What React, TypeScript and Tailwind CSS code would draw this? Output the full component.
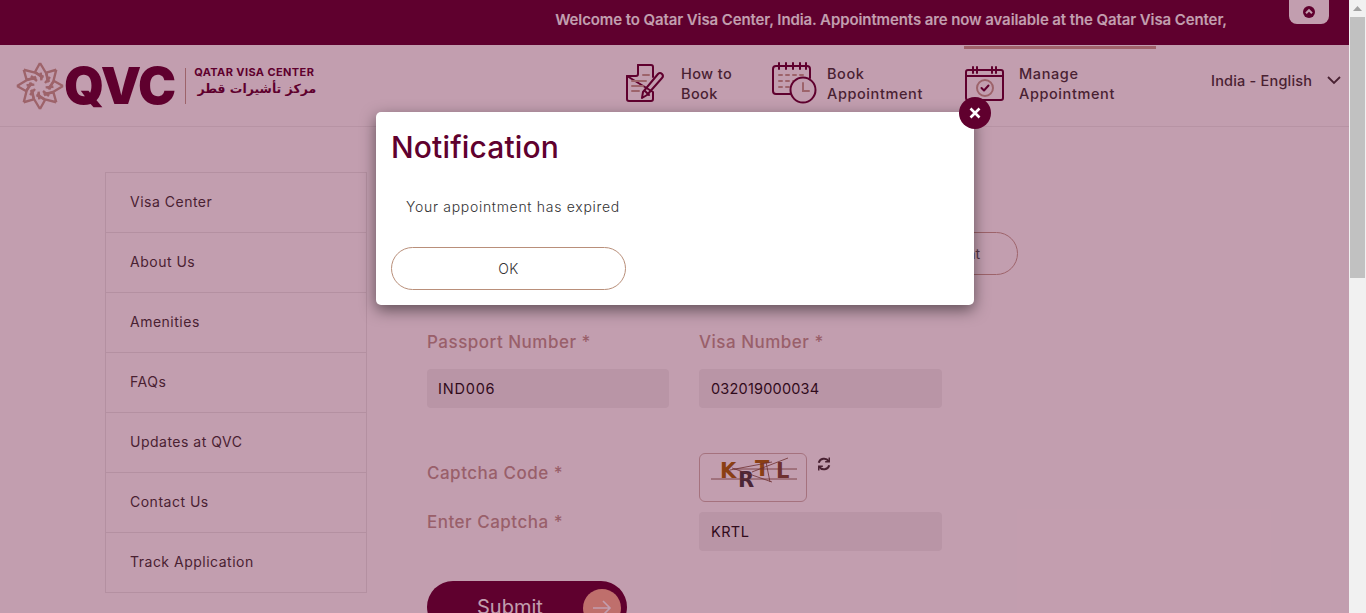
import React from "react";

const sideLinks = ["Visa Center", "About Us", "Amenities", "FAQs", "Updates at QVC", "Contact Us", "Track Application"];

function StarLogo() {
    const angles = [0, 45, 90, 135, 180, 225, 270, 315];
    return (
        <svg width="48" height="48" viewBox="-24 -24 48 48" fill="none" stroke="#c4a090" strokeWidth="2.4" strokeLinejoin="round" className="shrink-0">
            {angles.map((a) => (
                <g key={a} transform={`rotate(${a})`}>
                    <path d="M0 -23 L6 -13 L9 -4 M0 -23 L-5 -14 L3 -8 M-9 -10 L-3 -5" />
                </g>
            ))}
        </svg>
    );
}

function DocIcon() {
    return (
        <svg width="40" height="40" viewBox="0 0 40 40" fill="none" stroke="#60002e" strokeWidth="2" strokeLinejoin="round" strokeLinecap="round" className="shrink-0">
            <path d="M13 1 H26 Q28 1 28 3 V13 M28 28 V35 Q28 37 26 37 H4 Q2 37 2 35 V12 Z" />
            <path d="M13 1 V10 Q13 12 11 12 H2" />
            <path d="M33 10 Q35 8 37 10 Q39 12 37 14 L22 31 L17 34 L18 28 Z" />
            <path d="M20 27 L24 31" />
            <g stroke="#c4a090">
                <path d="M18 11 H24 M7 17 H21 M7 22 H18 M7 27 H14" />
            </g>
        </svg>
    );
}

function CalendarClockIcon() {
    return (
        <svg width="46" height="44" viewBox="0 0 46 44" fill="none" stroke="#60002e" strokeWidth="2" strokeLinecap="round" className="shrink-0">
            <path d="M20 32 H4 Q1 32 1 29 V7 Q1 4 4 4 H35 Q38 4 38 7 V16" />
            <path d="M7 1 V7 M14 1 V7 M21 1 V7 M28 1 V7 M34 1 V7" />
            <path d="M7 13 H10 M14 13 H17 M21 13 H24 M28 13 H31 M7 19 H10 M14 19 H17 M21 19 H24 M7 25 H10 M14 25 H17" stroke="#c4a090" />
            <circle cx="31" cy="28" r="12.5" fill="#ffffff" />
            <path d="M31 21 V29 H37" stroke="#c4a090" />
        </svg>
    );
}

function CalendarCheckIcon() {
    return (
        <svg width="40" height="36" viewBox="0 0 40 36" fill="none" stroke="#60002e" strokeWidth="2" strokeLinecap="round" strokeLinejoin="round" className="shrink-0">
            <rect x="1" y="4" width="37" height="30" rx="2" />
            <path d="M1 10 H38" />
            <path d="M8 1 V7 M12 1 V7 M27 1 V7 M31 1 V7" />
            <circle cx="20" cy="22" r="8" stroke="#c4a090" />
            <path d="M16.5 22 L19 24.5 L23.5 19.5" />
        </svg>
    );
}

function Captcha() {
    return (
        <svg width="106" height="47" viewBox="0 0 106 47" fontFamily="'DejaVu Sans', sans-serif" fontWeight="700" fontSize="21">
            <text x="20" y="24" fill="#a46505">K</text>
            <text x="38" y="33" fill="#3d3d3d">R</text>
            <text x="55" y="22" fill="#a46505">T</text>
            <text x="76" y="24" fill="#774d32">L</text>
            <g stroke="#774d32" strokeWidth="0.8" fill="none">
                <path d="M11 25 H97 M34 15 H97 M32 14 L72 28 M52 18 L88 4 M66 8 L70 28 M30 16 L72 8" />
            </g>
        </svg>
    );
}

function App() {
    return (
        <div className="flex h-[613px] w-[1366px] overflow-hidden bg-white font-['Inter',sans-serif]">
            <div className="relative h-[613px] w-[1349px] shrink-0 overflow-hidden">
                {/* top bar */}
                <div className="relative flex h-[45px] justify-end bg-[#60002e]">
                    <p className="mt-[9px] mr-[122px] text-[15px] font-semibold tracking-[-0.1px] text-white">
                        Welcome to Qatar Visa Center, India. Appointments are now available at the Qatar Visa Center,
                    </p>
                    <div className="absolute top-0 left-[1289px] flex h-6 w-10 items-center justify-center rounded-b-lg bg-white">
                        <svg width="12" height="12" viewBox="0 0 12 12">
                            <circle cx="6" cy="6" r="6" fill="#60002e" />
                            <path d="M3 7.2 L6 4.2 L9 7.2" fill="none" stroke="#ffffff" strokeWidth="2" />
                        </svg>
                    </div>
                </div>

                {/* header */}
                <div className="flex h-[82px] items-stretch border-b border-[#eeeeee]">
                    <div className="ml-[16px] flex w-[609px] items-center">
                        <StarLogo />
                        <span className="text-[51px] leading-none font-black tracking-[-1px] text-[#60002e]">QVC</span>
                        <div className="ml-[10px] h-[36px] w-px bg-[#c4a090]" />
                        <div className="mb-[8px] ml-[8px] flex w-[122px] flex-col">
                            <span className="text-[11px] leading-[14px] font-bold tracking-[0.4px] text-[#60002e]">QATAR VISA CENTER</span>
                            <span dir="rtl" className="font-['DejaVu_Sans',sans-serif] text-[12.5px] leading-[20px] font-bold text-[#60002e]">مركز تأشيرات قطر</span>
                        </div>
                    </div>
                    <div className="flex w-[147px] items-center pb-1">
                        <DocIcon />
                        <span className="ml-4 text-[14.5px] leading-5 font-medium tracking-[0.4px] text-[#3b3535]">How to<br />Book</span>
                    </div>
                    <div className="flex w-[192px] items-center pb-1">
                        <CalendarClockIcon />
                        <span className="ml-[9px] text-[14.5px] leading-5 font-medium tracking-[0.6px] text-[#3b3535]">Book<br />Appointment</span>
                    </div>
                    <div className="mt-px flex w-[192px] items-center border-t-[3px] border-[#c8a090] pb-[7px] pl-px">
                        <CalendarCheckIcon />
                        <span className="ml-[14px] text-[14.5px] leading-5 font-medium tracking-[0.6px] text-[#3b3535]">Manage<br />Appointment</span>
                    </div>
                    <div className="ml-[55px] flex items-center pb-[10px]">
                        <span className="text-[14.5px] font-medium tracking-[0.2px] text-[#3b3535]">India - English</span>
                        <svg className="ml-[15px]" width="14" height="9" viewBox="0 0 14 9" fill="none" stroke="#3b3535" strokeWidth="1.8">
                            <path d="M1 1 L7 7 L13 1" />
                        </svg>
                    </div>
                </div>

                {/* content */}
                <div className="flex pt-[45px]">
                    <div className="ml-[105px] h-[421px] w-[262px] shrink-0 border border-b-0 border-[#e8e8e8]">
                        {sideLinks.map((link) => (
                            <div key={link} className="flex h-[60px] items-center border-b border-[#e8e8e8] pb-[2px] pl-[24px] text-[14px] tracking-[0.5px] text-[#3b3535]">
                                {link}
                            </div>
                        ))}
                    </div>
                    <div className="ml-[60px] w-[591px]">
                        <div className="mt-[60px] flex justify-end">
                            <div className="flex h-[43px] w-[235px] items-center justify-end rounded-full border border-[#c4a090] pr-[37px] text-[14px] text-[#555555]">
                                Cancel Appointment
                            </div>
                        </div>
                        <div className="mt-[56px] grid grid-cols-[242px_243px] gap-x-[30px]">
                            <label className="text-[17px] leading-[22px] font-medium tracking-[0.5px] text-[#bd9a8f]">Passport Number *</label>
                            <label className="text-[17px] leading-[22px] font-medium tracking-[0.5px] text-[#bd9a8f]">Visa Number *</label>
                            <div className="mt-[16px] flex h-[39px] items-center rounded bg-[#f0f0f0] pl-[11px] text-[14.5px] tracking-[0.8px] text-[#111111]">IND006</div>
                            <div className="mt-[16px] flex h-[39px] items-center rounded bg-[#f0f0f0] pl-[12px] text-[14.5px] tracking-[0.2px] text-[#111111]">032019000034</div>
                        </div>
                        <div className="mt-[45px] grid grid-cols-[242px_243px] gap-x-[30px]">
                            <label className="mt-[9px] text-[17px] leading-[22px] font-medium tracking-[0.5px] text-[#bd9a8f]">Captcha Code *</label>
                            <div className="flex items-start">
                                <div className="h-[49px] w-[108px] rounded-md border border-[#d0b8b0] bg-white">
                                    <Captcha />
                                </div>
                                <svg className="mt-[4px] ml-[10px]" width="14" height="14" viewBox="0 0 24 24" fill="none" stroke="#3b3535" strokeWidth="3.5">
                                    <path d="M3 10 A9.5 9.5 0 0 1 20 7 M21 14 A9.5 9.5 0 0 1 4 17" />
                                    <path d="M21 1 V8 H14 M3 23 V16 H10" strokeWidth="2.5" />
                                </svg>
                            </div>
                            <label className="mt-[9px] text-[17px] leading-[22px] font-medium tracking-[0.5px] text-[#bd9a8f]">Enter Captcha *</label>
                            <div className="mt-[10px] flex h-[39px] items-center rounded bg-[#f0f0f0] pl-[12px] text-[14.5px] tracking-[0.4px] text-[#111111]">KRTL</div>
                        </div>
                        <button className="mt-[30px] flex h-[52px] w-[200px] items-center rounded-[26px] bg-[#60002e] pr-[6px] pl-[50px] text-[20px] text-white">
                            Submit
                            <span className="mt-[1px] ml-auto flex h-[38px] w-[38px] items-center justify-center rounded-full bg-[#fab393]">
                                <svg width="20" height="16" viewBox="0 0 20 16" fill="none" stroke="#ffffff" strokeWidth="1.6">
                                    <path d="M1 8 H18 M11 1 L18 8 L11 15" />
                                </svg>
                            </span>
                        </button>
                    </div>
                </div>

                {/* notification dialog */}
                <div className="absolute inset-0 bg-[#60002d]/38" />
                <div className="absolute top-[112px] left-[376px] h-[193px] w-[598px] rounded-[5px] bg-white px-[15px] shadow-[0_5px_15px_rgba(0,0,0,0.5)]">
                    <h2 className="mt-[17px] text-[30px] leading-[36px] font-medium tracking-[0.15px] text-[#60002e]">Notification</h2>
                    <p className="mt-[32px] pl-[15px] text-[14px] leading-5 font-light tracking-[0.7px] text-[#333333]">Your appointment has expired</p>
                    <button className="mt-[30px] h-[43px] w-[235px] rounded-full border border-[#b98f7a] text-[14px] font-light tracking-[0.5px] text-[#333333]">OK</button>
                    <button className="absolute -top-[15px] -right-[17px] flex h-8 w-8 items-center justify-center rounded-full bg-[#60002e]">
                        <svg width="12" height="12" viewBox="0 0 12 12" stroke="#ffffff" strokeWidth="2.6">
                            <path d="M1.5 1.5 L10.5 10.5 M10.5 1.5 L1.5 10.5" />
                        </svg>
                    </button>
                </div>
            </div>

            {/* scrollbar */}
            <div className="flex w-[17px] flex-col items-center bg-[#f1f1f1]">
                <svg className="mt-[6px]" width="9" height="5" viewBox="0 0 9 5">
                    <path d="M4.5 0 L9 5 H0 Z" fill="#a3a3a3" />
                </svg>
                <div className="mt-[6px] h-[261px] w-[15px] bg-[#c1c1c1]" />
            </div>
        </div>
    );
}

export default App;
